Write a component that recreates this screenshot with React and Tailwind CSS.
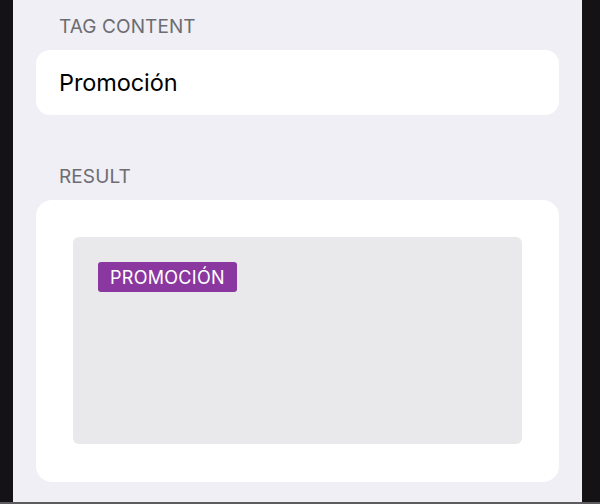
export default function App() {
  return (
    <div
      className="w-[600px] h-[504px] flex flex-col bg-[#141214] overflow-hidden"
      style={{ fontFamily: "Inter, 'Noto Sans', sans-serif" }}
    >
      <div className="h-[502px] flex">
        <div className="w-[13px] shrink-0" />

        {/* Main grouped list area */}
        <div className="w-[569px] h-full bg-[#efeff5] flex flex-col px-[23px]">
          <div className="pt-[17px] pl-[23px] text-[19px] leading-[20px] text-[#6c6c71] tracking-[0.1px]">
            TAG CONTENT
          </div>
          <div className="mt-[13px] h-[65px] bg-white rounded-[14px] flex items-center pl-[23px]">
            <span className="text-[23.5px] text-black tracking-[-0.1px]">Promoción</span>
          </div>

          <div className="mt-[52px] pl-[23px] text-[19px] leading-[20px] text-[#6c6c71] tracking-[0.1px]">
            RESULT
          </div>
          <div className="mt-[13px] h-[282px] bg-white rounded-[16px] px-[37px] pt-[37px]">
            <div className="h-[207px] bg-[#e9e8eb] rounded-[6px] pt-[25px] pl-[25px]">
              <span className="inline-flex items-center h-[30px] px-[12px] rounded-[3px] bg-[#8a38a0] text-white text-[18px] tracking-[0.3px]">
                PROMOCIÓN
              </span>
            </div>
          </div>
        </div>
      </div>
      <div className="h-[2px] bg-[#5c5c5e]" />
    </div>
  );
}
